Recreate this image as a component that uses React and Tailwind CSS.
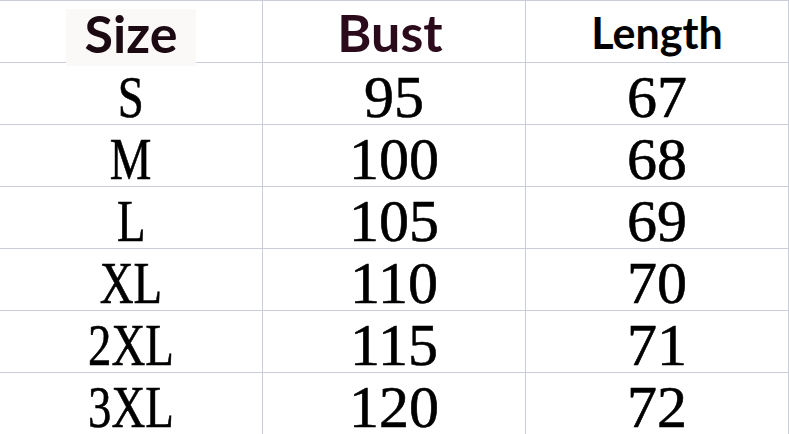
import React from "react";

const rows = [
  ["S", "95", "67"],
  ["M", "100", "68"],
  ["L", "105", "69"],
  ["XL", "110", "70"],
  ["2XL", "115", "71"],
  ["3XL", "120", "72"],
];

const cell = "border-r border-b border-[#c9ccd9] flex items-center justify-center";
const num = "font-['Liberation_Serif',serif] text-[60px] leading-none text-black pt-[7px] [-webkit-text-stroke:0.6px_black]";

export default function App() {
  return (
    <div className="w-[789px] h-[434px] overflow-hidden bg-white">
      <div className="grid grid-cols-[263px_263px_263px] border-t border-[#c9ccd9]">
        {/* cabecera */}
        <div className={`${cell} h-[62px]`}>
          <div className="relative z-10 mt-[6px] mb-[-5px] w-[130px] h-[57px] bg-[#faf9f7] flex items-center justify-center">
            <span className="font-['Lato',sans-serif] font-bold text-[52px] leading-none text-[#1c0a12] pb-[8px]">
              Size
            </span>
          </div>
        </div>
        <div className={`${cell} h-[62px] pr-2`}>
          <span className="font-['Lato',sans-serif] font-bold text-[52px] leading-none text-[#2b0a1c] pt-[1px]">
            Bust
          </span>
        </div>
        <div className={`${cell} h-[62px]`}>
          <span className="font-['Lato',sans-serif] font-bold text-[43px] leading-none text-black pt-[1px]">
            Length
          </span>
        </div>

        {/* filas */}
        {rows.map(([size, bust, length]) => (
          <React.Fragment key={size}>
            <div className={`${cell} h-[62px]`}>
              <span className={`inline-block scale-x-[0.78] ${num}`}>{size}</span>
            </div>
            <div className={`${cell} h-[62px]`}>
              <span className={num}>{bust}</span>
            </div>
            <div className={`${cell} h-[62px]`}>
              <span className={num}>{length}</span>
            </div>
          </React.Fragment>
        ))}
      </div>
    </div>
  );
}
